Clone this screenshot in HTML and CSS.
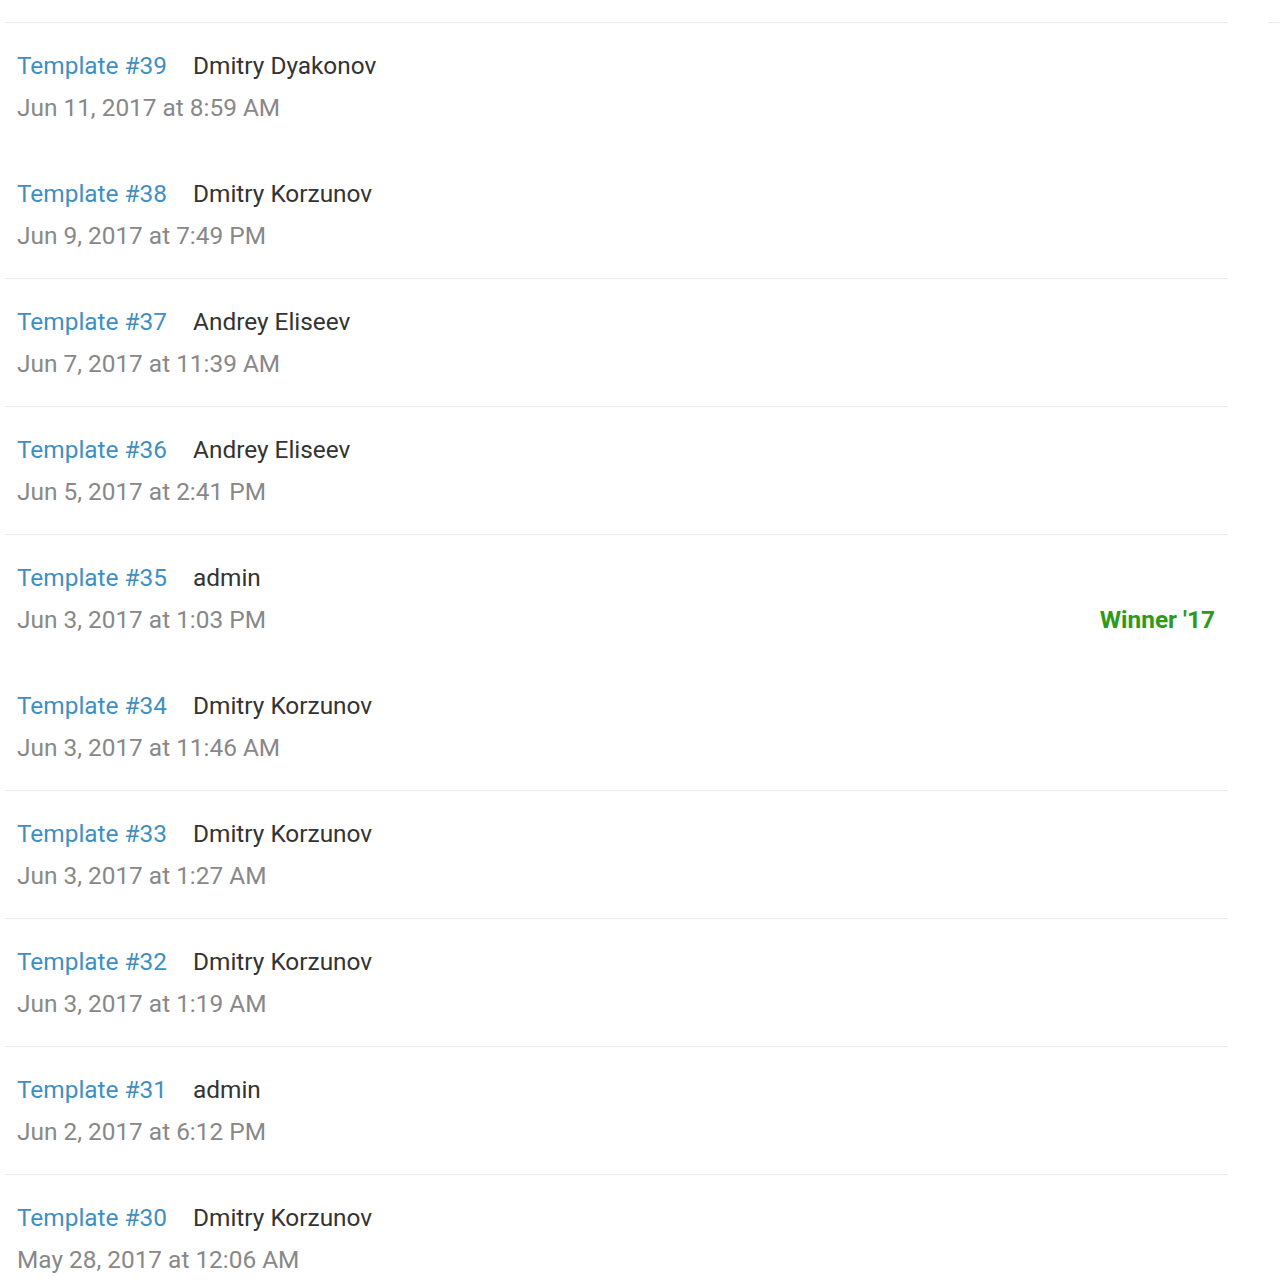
FILE: index.html
```html
<!DOCTYPE html>
<html>
<head>
<meta charset="utf-8">
<link rel="stylesheet" href="styles.css">
</head>
<body>
<div class="page">
  <ul class="list">
    <li class="row"><div class="head"><a class="title">Template #39</a><span class="author">Dmitry Dyakonov</span></div><div class="meta"><span class="date">Jun 11, 2017 at 8:59 AM</span></div></li>
    <li class="row row--plain"><div class="head"><a class="title">Template #38</a><span class="author">Dmitry Korzunov</span></div><div class="meta"><span class="date">Jun 9, 2017 at 7:49 PM</span></div></li>
    <li class="row"><div class="head"><a class="title">Template #37</a><span class="author">Andrey Eliseev</span></div><div class="meta"><span class="date">Jun 7, 2017 at 11:39 AM</span></div></li>
    <li class="row"><div class="head"><a class="title">Template #36</a><span class="author">Andrey Eliseev</span></div><div class="meta"><span class="date">Jun 5, 2017 at 2:41 PM</span></div></li>
    <li class="row"><div class="head"><a class="title">Template #35</a><span class="author">admin</span></div><div class="meta"><span class="date">Jun 3, 2017 at 1:03 PM</span><span class="badge">Winner '17</span></div></li>
    <li class="row row--plain"><div class="head"><a class="title">Template #34</a><span class="author">Dmitry Korzunov</span></div><div class="meta"><span class="date">Jun 3, 2017 at 11:46 AM</span></div></li>
    <li class="row"><div class="head"><a class="title">Template #33</a><span class="author">Dmitry Korzunov</span></div><div class="meta"><span class="date">Jun 3, 2017 at 1:27 AM</span></div></li>
    <li class="row"><div class="head"><a class="title">Template #32</a><span class="author">Dmitry Korzunov</span></div><div class="meta"><span class="date">Jun 3, 2017 at 1:19 AM</span></div></li>
    <li class="row"><div class="head"><a class="title">Template #31</a><span class="author">admin</span></div><div class="meta"><span class="date">Jun 2, 2017 at 6:12 PM</span></div></li>
    <li class="row"><div class="head"><a class="title">Template #30</a><span class="author">Dmitry Korzunov</span></div><div class="meta"><span class="date">May 28, 2017 at 12:06 AM</span></div></li>
  </ul>
  <div class="side"></div>
</div>
</body>
</html>
```

FILE: styles.css
```css
html, body {
  margin: 0;
  padding: 0;
  background: #fff;
}
body {
  font-family: Roboto, "Liberation Sans", sans-serif;
  font-size: 24.4px;
  overflow: hidden;
  height: 1280px;
}
.page {
  display: flex;
  align-items: flex-start;
  padding-top: 22px;
  padding-left: 5px;
}
.list {
  list-style: none;
  margin: 0;
  padding: 0;
  width: 1223px;
}
.row {
  border-top: 1px solid #ebebeb;
  padding: 21px 13px 22px 12px;
}
.row--plain {
  border-top-color: transparent;
}
.head, .meta {
  display: flex;
  align-items: center;
  height: 42px;
  white-space: nowrap;
}
.title {
  color: #3f8fc2;
  text-decoration: none;
  margin-right: 26px;
}
.author {
  color: #333;
}
.date {
  color: #888;
}
.badge {
  margin-left: auto;
  color: #2e9a1a;
  font-weight: 700;
}
.side {
  margin-left: 40px;
  flex: 1;
  border-top: 1px solid #ebebeb;
  height: 0;
}
```
